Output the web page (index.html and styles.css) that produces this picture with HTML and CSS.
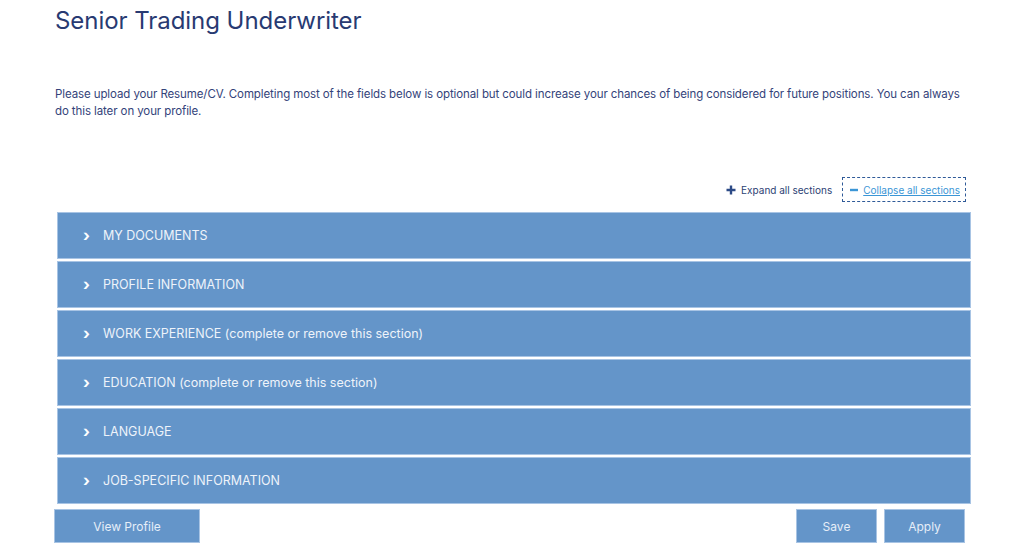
FILE: index.html
```html
<!DOCTYPE html>
<html lang="en">
<head>
  <meta charset="UTF-8" />
  <title>Senior Trading Underwriter</title>
  <link rel="stylesheet" href="styles.css">
</head>
<body>
  <div class="page">
    <h1 class="job-title">Senior Trading Underwriter</h1>

    <p class="intro">Please upload your Resume/CV. Completing most of the fields below is optional but could increase your chances of being considered for future positions. You can always do this later on your profile.</p>

    <div class="toggles">
      <a class="toggle expand" href="#">
        <svg width="10" height="10" viewBox="0 0 10 10"><path d="M5 0.5v9M0.5 5h9" stroke="#2c4a86" stroke-width="2.4"/></svg>
        <span>Expand all sections</span>
      </a>
      <a class="toggle collapse" href="#">
        <svg width="8" height="10" viewBox="0 0 8 10"><path d="M0 5h8" stroke="#3b96d6" stroke-width="2.4"/></svg>
        <span>Collapse all sections</span>
      </a>
    </div>

    <div class="accordion">
      <div class="section"><span class="chev">&#x203A;</span>MY DOCUMENTS</div>
      <div class="section"><span class="chev">&#x203A;</span>PROFILE INFORMATION</div>
      <div class="section"><span class="chev">&#x203A;</span>WORK EXPERIENCE (complete or remove this section)</div>
      <div class="section"><span class="chev">&#x203A;</span>EDUCATION (complete or remove this section)</div>
      <div class="section"><span class="chev">&#x203A;</span>LANGUAGE</div>
      <div class="section"><span class="chev">&#x203A;</span>JOB-SPECIFIC INFORMATION</div>
    </div>

    <div class="actions">
      <button class="btn view">View Profile</button>
      <div class="right">
        <button class="btn save">Save</button>
        <button class="btn apply">Apply</button>
      </div>
    </div>
  </div>
</body>
</html>
```

FILE: styles.css
```css
body {
  margin: 0;
  font-family: Inter, "Liberation Sans", sans-serif;
  background: #ffffff;
  color: #2b3b6e;
}

.page {
  width: 916px;
  padding: 0 0 0 55px;
}

.job-title {
  margin: 0;
  padding-top: 5px;
  font-size: 24px;
  font-weight: 400;
  line-height: 32px;
  color: #283a72;
  letter-spacing: -0.05px;
}

.intro {
  margin: 49px 0 0;
  font-size: 11.5px;
  letter-spacing: -0.1px;
  line-height: 17px;
  color: #34437a;
  width: 910px;
}

.toggles {
  display: flex;
  justify-content: flex-end;
  align-items: center;
  gap: 10px;
  margin-top: 57px;
  padding-right: 5px;
}

.toggle {
  display: flex;
  align-items: center;
  gap: 5px;
  font-size: 10px;
  text-decoration: none;
}

.toggle.expand {
  color: #2c3f74;
}

.toggle.collapse {
  color: #3b96d6;
  border: 1px dashed #2f5a98;
  height: 23px;
  padding: 0 5px 0 7px;
}

.toggle.collapse span {
  text-decoration: underline;
}

.accordion {
  margin-top: 10px;
  margin-left: 2px;
  display: flex;
  flex-direction: column;
  gap: 2px;
}

.section {
  height: 45px;
  background: #6495c9;
  border: 1px solid #a8c4e4;
  display: flex;
  align-items: center;
  padding-left: 25px;
  font-size: 12.5px;
  color: #eef3fa;
}

.chev {
  width: 20px;
  font-size: 16px;
  font-weight: 700;
  color: #ffffff;
  line-height: 1;
  margin-top: -2px;
}

.actions {
  display: flex;
  justify-content: space-between;
  margin-top: 5px;
  margin-left: -1px;
  padding-right: 6px;
}

.actions .right {
  display: flex;
  gap: 7px;
}

.btn {
  height: 34px;
  background: #6495c9;
  border: 1px solid #a8c4e4;
  color: #e6eef8;
  font-family: Inter, "Liberation Sans", sans-serif;
  font-size: 12px;
  padding: 0;
}

.btn.view {
  width: 146px;
}

.btn.save,
.btn.apply {
  width: 81px;
}
```
